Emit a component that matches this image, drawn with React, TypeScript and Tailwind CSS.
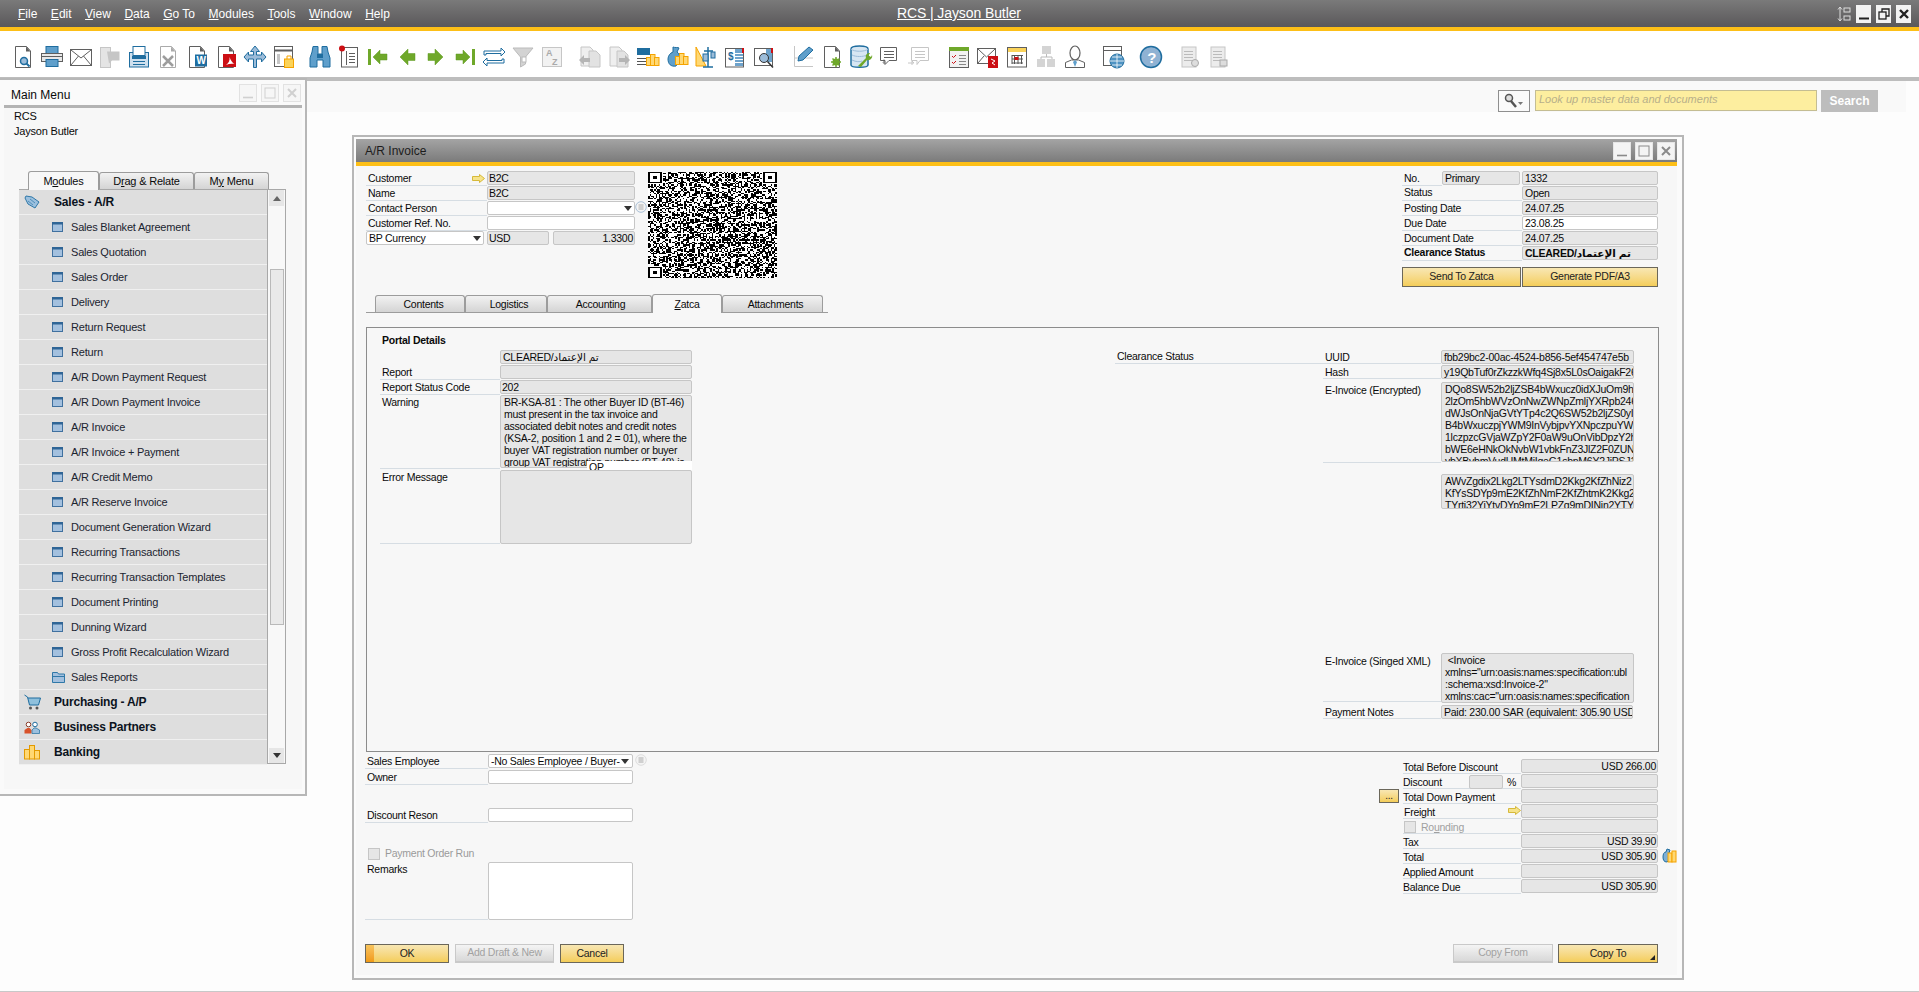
import React from "react";
import clsx from "clsx";

const G = "#5f5f5f", B = "#1f6d9f", LB = "#9cbcd9", GR = "#6fa82a", O = "#f5a300", Y = "#fbd35a", R = "#cc0f14", LG = "#c6c6c6";

const S = ({ children, cn }: { children: React.ReactNode; cn?: string }) => (
  <svg viewBox="0 0 24 24" className={cn ?? "w-6 h-6"} fill="none">{children}</svg>
);
const Doc = ({ c = G }: { c?: string }) => (<><path d="M4.5 1.5h11l4 4.5v16.500h-15z" stroke={c} fill="#fff" /><path d="M15 1.500v5h4.500z" fill={c} /></>);
const Coins = ({ x = 0, y = 0 }: { x?: number; y?: number }) => (
  <g transform={`translate(${x} ${y})`} stroke={O} fill="#ffd873"><rect x="0.500" y="5.500" width="4.500" height="8" /><rect x="4.500" y="2.500" width="4.500" height="11" /><rect x="8.500" y="5.500" width="4.500" height="8" /></g>
);
const Lines = ({ x, y, w, n, c = G, gap = 3 }: { x: number; y: number; w: number; n: number; c?: string; gap?: number }) => (
  <g stroke={c}>{Array.from({ length: n }, (_, i) => <path key={i} d={`M${x} ${y + i * gap + 0.5}h${w}`} />)}</g>
);

const toolbar: { ml?: string; el: React.ReactNode }[] = [
  { el: <><Doc /><circle cx="13" cy="16" r="3.500" stroke={B} fill={LB} strokeWidth="1.500" /><path d="M15.500 18.500l3 3" stroke={B} strokeWidth="2" /></> },
  { el: <><rect x="6" y="1.500" width="12" height="8" fill="#5f9fcb" stroke={B} /><rect x="1.500" y="8.500" width="21" height="8" fill="#e8e8e8" stroke={G} /><rect x="6" y="14.500" width="12" height="7" fill="#5f9fcb" stroke={B} /><path d="M1.500 11.500h21" stroke={G} /></> },
  { el: <><rect x="1.500" y="4.500" width="21" height="16" fill="#fff" stroke={G} /><path d="M2 5l10 8 10-8M2 20l7.500-9M22 20l-7.500-9" stroke={G} /></> },
  { el: <><rect x="2.500" y="2.500" width="10" height="20" fill="#e4e4e4" stroke={LG} /><path d="M9 6.500h12.500v9H14l-3 3z" fill={LG} /></> },
  { el: <><rect x="2.500" y="7.500" width="19" height="14.500" fill="#cfe0ee" stroke={B} /><rect x="6" y="1.500" width="12" height="9" fill="#fff" stroke={B} /><rect x="5" y="11" width="14" height="3" fill={B} /><Lines x={6} y={16} w={12} n={2} c={B} /></> },
  { el: <><Doc c="#aaa" /><path d="M7 11l10 10M17 11L7 21" stroke="#9d9d9d" strokeWidth="2.500" /></> },
  { el: <><Doc /><rect x="10" y="9.500" width="12" height="12" fill={B} /><text x="11.500" y="19" fontSize="10" fontWeight="700" fill="#fff" fontFamily="Liberation Sans">W</text></> },
  { el: <><Doc /><rect x="9" y="9" width="13" height="13" fill={R} /><path d="M12 20c3-2 4-5 3.500-8 1 3 3 6 5 7-3-.5-6 0-8.500 1z" fill="#fff" /></> },
  { el: <path d="M12 1l4.500 5.500h-3V10h5V7l4.500 5-4.500 5v-3h-5v8.500h-3V14h-5v3L1 12l4.500-5v3h5V6.500h-3z" fill={LB} stroke={B} /> },
  { el: <><rect x="2.500" y="1.500" width="18" height="20" fill="#fff" stroke={G} /><path d="M3 5.500h17" stroke={G} strokeWidth="2" /><rect x="5" y="9" width="3" height="10" fill={LG} /><rect x="12.500" y="14" width="9" height="8.500" fill={Y} stroke={O} /><path d="M15 14v-3h4v3" stroke={O} /></> },
  { ml: "ml-[7px]", el: <><path d="M4 7l1-5.500h5V9h4V1.500h5L20 7l2 6v9h-7v-7H9v7H2v-9z" fill="#5f9fcb" stroke={B} /><rect x="9" y="9" width="6" height="4" fill={B} /></> },
  { el: <><rect x="4.500" y="2.500" width="16" height="19.500" fill="#fff" stroke={G} /><circle cx="5" cy="3.500" r="3" fill={R} /><Lines x={12} y={8} w={6} n={4} /><path d="M9.500 6v14" stroke={G} /></> },
  { el: <><rect x="2" y="4" width="3" height="16" fill={GR} /><path d="M7 12l7-7v4h7v6h-7v4z" fill={GR} stroke="#5f9a20" strokeWidth=".5" /></> },
  { el: <path d="M5 12l8-8v4.500h7v7h-7V20z" fill={GR} stroke="#5f9a20" strokeWidth=".5" /> },
  { el: <path d="M19 12l-8-8v4.500H4v7h7V20z" fill={GR} stroke="#5f9a20" strokeWidth=".5" /> },
  { el: <><rect x="19" y="4" width="3" height="16" fill={GR} /><path d="M17 12l-7-7v4H3v6h7v4z" fill={GR} stroke="#5f9a20" strokeWidth=".5" /></> },
  { el: <><path d="M2 10V6h17V3l4 4-4 4V8.500H4V10z" fill="#fff" stroke={B} /><path d="M22 14v4H5v3l-4-4 4-4v2.500h15V14z" fill="#fff" stroke={B} /></> },
  { el: <><path d="M2 3h20l-7.500 9v7l-5 3V12z" fill="#d3d3d3" stroke="#bbb" /><rect x="11" y="12" width="4" height="5" fill="#fff" stroke="#bbb" /></> },
  { el: <><rect x="2.500" y="2.500" width="19" height="19" fill="#f2f2f2" stroke={LG} /><text x="6" y="11" fontSize="9" fontWeight="700" fill="#aaa" fontFamily="Liberation Sans">A</text><text x="12" y="20" fontSize="9" fontWeight="700" fill="#aaa" fontFamily="Liberation Sans">Z</text></> },
  { ml: "ml-[9px]", el: <><path d="M3 2h9l3 3v4h-3v12H3z" fill="#efefef" stroke={LG} /><path d="M11 6h7l4 4v12H11z" fill="#e2e2e2" stroke={LG} /><path d="M1 15l5-5v3h6v4H6v3z" fill="#b5b5b5" /></> },
  { el: <><path d="M3 2h9l3 3v16H3z" fill="#efefef" stroke={LG} /><path d="M10 6h7l4 4v12H10z" fill="#e2e2e2" stroke={LG} /><path d="M23 15l-5-5v3h-6v4h6v3z" fill="#b5b5b5" /></> },
  { el: <><rect x="1" y="3" width="13" height="7" fill={B} /><Lines x={1} y={13} w={9} n={3} c="#555" gap={3} /><Coins x={10} y={7} /></> },
  { el: <><path d="M8 2c2 1 5 0 6 1l-2 4c3 2 3 6 2 9l-3 5c-5 1-8-2-8-7 0-3 2-6 5-7z" fill="#5f9fcb" stroke={B} /><Coins x={10} y={6} /></> },
  { el: <><path d="M2 2v19h10z" fill="#ffd873" stroke={O} /><path d="M14 2v20M9 22h10M10 6h9" stroke={B} strokeWidth="1.500" /><rect x="9" y="9" width="5" height="7" fill={LB} stroke={B} /><rect x="17" y="7" width="4" height="6" fill={LB} stroke={B} /></> },
  { el: <><rect x="2.500" y="3.500" width="18" height="18.500" fill="#fff" stroke={G} /><rect x="12" y="4" width="8" height="17" fill="#6ea3cc" /><text x="5" y="15" fontSize="10" fontWeight="700" fill={B} fontFamily="Liberation Sans">$</text><Lines x={12} y={8} w={8} n={4} c="#fff" /><rect x="19" y="3" width="2" height="5" fill={R} /></> },
  { el: <><rect x="2.500" y="3.500" width="18" height="17" fill="#fff" stroke={G} /><rect x="14" y="4" width="6" height="13" fill="#6ea3cc" /><circle cx="12" cy="13" r="4.500" fill={LB} stroke="#333" /><path d="M15.500 16.500l5.500 6" stroke="#333" strokeWidth="1.500" /><rect x="19" y="3" width="2" height="5" fill={R} /></> },
  { ml: "ml-[10px]", el: <><path d="M3.500 1v20.500H22" stroke={LG} /><path d="M3 13h19" stroke={LG} /><path d="M7 16l1-5L18 2l4 3-10 10z" fill="#5f9fcb" stroke={B} /></> },
  { el: <><Doc /><circle cx="16" cy="17" r="3.500" fill={GR} /><circle cx="16" cy="17" r="1.200" fill="#fff" /><path d="M16 12v10M11 17h10M12.500 13.500l7 7M19.500 13.500l-7 7" stroke={GR} strokeWidth="1.500" /></> },
  { el: <><path d="M2 4c0-4 17-4 17 0v16c0 3-17 3-17 0z" fill="#d7e6f2" stroke={B} strokeWidth="1.500" /><path d="M2 4c3 3 14 3 17 0M3 10c4 2 11 2 15 0M3 15c4 2 8 2 10 1" stroke={LB} /><path d="M9 21l8-8c-1-3 1-5 4-5l-1.500 2.500 2.500 1.500 1-2c1 3-2 6-5 5l-6 7z" fill={GR} /></> },
  { el: <><path d="M2.500 2.500h16v13H11l-4 4v-4H2.500z" stroke={G} fill="#fff" /><path d="M6 14.500v4l-1-1" stroke={G} /><Lines x={6} y={6} w={10} n={3} gap={3} /></> },
  { el: <><path d="M4.500 2.500h17v13H13l-3 4v-4H4.500z" stroke={LG} fill="#fff" /><Lines x={8} y={6} w={10} n={3} gap={3} c={LG} /><path d="M1 18h6l-2-2v4" stroke={LG} /></> },
  { ml: "ml-[11px]", el: <><rect x="2.500" y="2.500" width="19" height="20" fill="#f2f2f2" stroke={G} /><rect x="2" y="2" width="20" height="4" fill={GR} /><path d="M5 11l1.500 1.500L9 10M5 17l1.500 1.500L9 16" stroke={R} /><Lines x={12} y={10} w={7} n={4} gap={3} c="#888" /></> },
  { el: <><rect x="1.500" y="3.500" width="18" height="15" fill="#fff" stroke={G} /><path d="M2 4l8.500 8L19 4M2 18l6-7M19 18l-6-7" stroke={G} /><rect x="12" y="11" width="10" height="12" fill={R} /><path d="M15 14l4 2-3 2 3 2" stroke="#fff" /></> },
  { el: <><rect x="2.500" y="2.500" width="19" height="19.500" fill="#fff" stroke={G} /><rect x="3" y="3" width="18" height="4" fill={Y} /><path d="M7 10.500h11M7 14h11M7 18h11M9.500 10v9M13 10v9M16.500 10v9M7 10v9" stroke="#555" /><rect x="9.500" y="12" width="4" height="3" fill={R} /></> },
  { el: <><rect x="8" y="1" width="9" height="8" fill="#d4d4d4" /><rect x="3" y="14" width="8" height="8" fill="#d4d4d4" /><rect x="13" y="14" width="8" height="8" fill="#d4d4d4" /><path d="M12.500 9v3M7 14v-2h11v2" stroke="#bbb" /></> },
  { el: <><ellipse cx="12" cy="8" rx="5" ry="7" fill="#fff" stroke={G} strokeWidth="1.200" /><path d="M2.500 22.500v-5l6-2.500h7l6 2.500v5z" fill="#fff" stroke={G} /><path d="M12 15l-2 2 2 5 2-5z" fill="#5f9fcb" /></> },
  { ml: "ml-[9px]", el: <><rect x="2.500" y="1.500" width="18" height="19" fill="#fff" stroke={G} /><path d="M3 5.500h17" stroke={G} /><circle cx="16" cy="16" r="7" fill="#4f93c3" stroke={B} /><path d="M9 16h14M16 9v14M11 12h10M11 20h10" stroke="#fff" strokeWidth=".8" /></> },
  { ml: "ml-[9px]", el: <><circle cx="12" cy="12" r="10.500" fill="#8fb2d3" stroke={B} strokeWidth="1.500" /><text x="8.300" y="17.500" fontSize="15" fontWeight="700" fill="#fff" fontFamily="Liberation Sans">?</text></> },
  { ml: "ml-[9px]", el: <><rect x="5" y="2" width="14" height="20" fill="#ececec" stroke={LG} /><Lines x={7} y={6} w={9} n={4} c="#bbb" /><circle cx="18" cy="18" r="3.500" fill="#ddd" stroke="#aaa" /></> },
  { el: <><rect x="5" y="2" width="14" height="20" fill="#ececec" stroke={LG} /><Lines x={7} y={6} w={9} n={4} c="#bbb" /><rect x="14" y="15" width="7" height="6" fill="#ddd" stroke="#aaa" /></> },
];

const menu = ["File", "Edit", "View", "Data", "Go To", "Modules", "Tools", "Window", "Help"];

const qrPath = (() => {
  let seed = 20250724;
  const rnd = () => { seed = (seed * 1664525 + 1013904223) >>> 0; return seed / 4294967296; };
  const n = 85;
  const inFinder = (x: number, y: number) => (x < 10 && y < 10) || (x >= n - 10 && y < 10) || (x < 10 && y >= n - 10);
  let d = "";
  for (let y = 0; y < n; y++) for (let x = 0; x < n; x++) if (!inFinder(x, y) && rnd() > 0.5) d += `M${x} ${y}h1v1h-1z`;
  const f = (x: number, y: number) => `M${x} ${y}h9v9h-9zM${x + 1} ${y + 1}v7h7v-7zM${x + 3} ${y + 3}h3v3h-3z`;
  return d + f(0, 0) + f(n - 9, 0) + f(0, n - 9);
})();

const Mn = ({ t, i = 0 }: { t: string; i?: number }) => <span>{t.slice(0, i)}<u>{t[i]}</u>{t.slice(i + 1)}</span>;
const Cleared = () => <><span>CLEARED/</span><span className="tracking-normal">تم الإعتماد</span></>;

const WinBtns = ({ dim }: { dim?: boolean }) => {
  const c = dim ? "#d0d0d0" : "#8a8a8a";
  const box = clsx("w-[18px] h-[18px] border flex items-center justify-center", dim ? "border-[#e2e2e2] bg-[#f6f6f6]" : "border-[#e6e6e6] bg-[#f4f4f4]");
  return (
    <div className="flex gap-[4px]">
      <div className={box}><svg viewBox="0 0 12 12" className="w-3 h-3"><path d="M1 10.500h10" stroke={c} strokeWidth="1.600" /></svg></div>
      <div className={box}><svg viewBox="0 0 12 12" className="w-3 h-3"><rect x="1" y="1" width="10" height="10" fill="none" stroke={c} /></svg></div>
      <div className={box}><svg viewBox="0 0 12 12" className="w-3 h-3"><path d="M2 2l8 8M10 2l-8 8" stroke={c} strokeWidth="2" /></svg></div>
    </div>
  );
};

const Arrow = () => (
  <svg viewBox="0 0 13 9" className="w-[13px] h-[9px] shrink-0"><path d="M.5 2.500h7V.5l5 4-5 4v-2h-7z" fill="#f6e38a" stroke="#d6b93a" /></svg>
);
const Tri = () => <svg viewBox="0 0 8 5" className="w-2 h-[5px] shrink-0"><path d="M0 0h8L4 5z" fill="#333" /></svg>;
const Dots = ({ dim }: { dim?: boolean }) => (
  <svg viewBox="0 0 12 12" className="w-3 h-3 shrink-0"><circle cx="6" cy="6" r="5.300" fill="#f4f4f4" stroke={dim ? "#ddd" : "#a9bfd6"} /><path d="M3.500 4h5M3.500 6h5M3.500 8h5" stroke="#999" strokeWidth=".8" /></svg>
);

const Lab = ({ w, children, className }: { w: string; children?: React.ReactNode; className?: string }) => (
  <div className={clsx("h-[15px] border-b border-[#d6dde3] leading-[15px] pl-[2px] whitespace-nowrap shrink-0", w, className)}>{children}</div>
);
const Field = ({ w, white, children, right, className }: { w: string; white?: boolean; right?: boolean; children?: React.ReactNode; className?: string }) => (
  <div className={clsx("h-[14px] border border-[#c6c6c6] rounded-[2px] leading-[13px] px-[1px] overflow-hidden whitespace-nowrap shrink-0 flex items-center", white ? "bg-white" : "bg-[#e6e6e6]", right ? "justify-end" : "", w, className)}>{children}</div>
);
const YBtn = ({ w, children, className }: { w: string; children: React.ReactNode; className?: string }) => (
  <div className={clsx("relative flex items-center justify-center border border-[#6b675a] bg-linear-to-b from-[#f8e7b3] to-[#f4cd58] text-[#222]", w, className)}>{children}</div>
);
const GBtn = ({ w, children }: { w: string; children: React.ReactNode }) => (
  <div className={clsx("flex items-center justify-center border border-[#c9c9c9] border-b-2 bg-linear-to-b from-[#f4f4f4] to-[#d8d8d8] text-[#a2a2a2]", w)}>{children}</div>
);

const Lines2 = ({ lines, h, className }: { lines: string[]; h: string; className?: string }) => (
  <div className={clsx("bg-[#e6e6e6] border border-[#c6c6c6] rounded-[2px] overflow-hidden leading-[12px] whitespace-nowrap", h, className)}>
    {lines.map((l) => <div key={l}>{l}</div>)}
  </div>
);

const WinIcon = () => (
  <svg viewBox="0 0 11 10" className="w-[11px] h-[10px]"><rect x=".5" y=".5" width="10" height="9" fill="#a3c0de" stroke="#3f709f" /><rect x="0" y="0" width="11" height="2.500" fill="#2f6596" /></svg>
);
const FolderIcon = () => (
  <svg viewBox="0 0 13 11" className="w-[13px] h-[11px]"><path d="M.5 10.500V.5h5l1 1.500h6v8.500z" fill="#a3c0de" stroke="#2f78a8" /><path d="M1 4.500h11" stroke="#2f78a8" /></svg>
);

const subItems = ["Sales Blanket Agreement", "Sales Quotation", "Sales Order", "Delivery", "Return Request", "Return", "A/R Down Payment Request", "A/R Down Payment Invoice", "A/R Invoice", "A/R Invoice + Payment", "A/R Credit Memo", "A/R Reserve Invoice", "Document Generation Wizard", "Recurring Transactions", "Recurring Transaction Templates", "Document Printing", "Dunning Wizard", "Gross Profit Recalculation Wizard", "Sales Reports"];

const modIcons: Record<string, React.ReactNode> = {
  "Sales - A/R": <svg viewBox="0 0 16 14" className="w-4 h-[14px]"><path d="M1 3l1-2 6 1 7 5-4 6-7-4z" fill="#9cc0de" stroke="#2f78a8" /><path d="M4 6l5 4M6 4l5 4" stroke="#2f78a8" strokeWidth=".7" /></svg>,
  "Purchasing - A/P": <svg viewBox="0 0 17 16" className="w-[17px] h-4"><path d="M.5 1l3 2 2 8h9l2-7H4" fill="#8fc0dc" stroke="#1f6d9f" /><circle cx="6.500" cy="14" r="1.500" fill="#555" /><circle cx="13" cy="14" r="1.500" fill="#555" /></svg>,
  "Business Partners": <svg viewBox="0 0 16 13" className="w-4 h-[13px]"><path d="M.5 12.500V9l3-2h2l2 2v3.500z" fill="#d8522a" /><path d="M8 12.500V9l2-2h2l3.500 2v3.500z" fill="#9cc0de" stroke="#1f6d9f" strokeWidth=".7" /><circle cx="4.500" cy="3.500" r="2.300" fill="#fff" stroke="#8a3d2a" /><circle cx="11" cy="3.500" r="2.300" fill="#fff" stroke="#1f6d9f" /></svg>,
  Banking: <svg viewBox="0 0 16 15" className="w-4 h-[15px]"><g stroke="#e39a00" fill="#ffd873"><rect x=".5" y="4.500" width="5" height="9.500" /><rect x="5.500" y=".5" width="5" height="13.500" /><rect x="10.500" y="5.500" width="5" height="8.500" /></g></svg>,
};

const ModRow = ({ t }: { t: string }) => (
  <div className="h-[25px] border-b border-[#f0f0f0] bg-[#dedede] flex items-center font-bold text-[12px] tracking-[-0.2px] text-[#0b1320]">
    <div className="w-[35px] pl-[5px] flex justify-start">{modIcons[t]}</div><div>{t}</div>
  </div>
);

const Tab = ({ w, active, children }: { w: string; active?: boolean; children: React.ReactNode }) => (
  <div className={clsx("flex items-center justify-center border border-b-0 rounded-t-[3px] border-[#9c9c9c] shrink-0 pt-px", w, active ? "h-[19px] bg-[#f7f7f7] -mb-px relative z-10" : "h-[17px] bg-linear-to-b from-[#f2f2f2] to-[#d4d4d4]")}>{children}</div>
);

const Portal = () => (
  <div className="flex">
    <div className="w-[312px] ml-[13px]">
      <div className="h-[22px] pl-[2px] pt-[5px] font-bold leading-[14px]">Portal Details</div>
      <div className="flex"><div className="w-[120px]" /><Field w="w-[192px]" className="pl-[2px]"><Cleared /></Field></div>
      <div className="flex mt-px"><Lab w="w-[120px]">Report</Lab><Field w="w-[192px]" /></div>
      <div className="flex"><Lab w="w-[120px]">Report Status Code</Lab><Field w="w-[192px]">202</Field></div>
      <div className="flex h-[75px] relative">
        <Lab w="w-[120px] !h-[74px]">Warning</Lab>
        <Lines2 h="h-[73px]" className="w-[192px] pl-[3px]" lines={["BR-KSA-81 : The other Buyer ID (BT-46)", "must present in the tax invoice and", "associated debit notes and credit notes", "(KSA-2, position 1 and 2 = 01), where the", "buyer VAT registration number or buyer", "group VAT registration number (BT-48) is"]} />
        <div className="absolute left-[207px] top-[66px] w-[105px] h-[9px] bg-white overflow-hidden pl-[2px] leading-[13px] z-10">OP</div>
      </div>
      <div className="flex">
        <Lab w="w-[120px] !h-[74px]">Error Message</Lab>
        <div className="w-[192px] h-[74px] bg-[#e6e6e6] border border-[#c6c6c6] rounded-[2px]" />
      </div>
    </div>
    <div className="w-[208px] ml-[423px] mt-[22px]">
      <Lab w="w-full !h-[14px] pl-[2px] !leading-[13px]">Clearance Status</Lab>
    </div>
    <div className="w-[311px] mt-[22px]">
      <div className="flex"><Lab w="w-[118px] !h-[14px]">UUID</Lab><Field w="w-[193px]" className="pl-[2px]">fbb29bc2-00ac-4524-b856-5ef454747e5b</Field></div>
      <div className="flex mt-px"><Lab w="w-[118px] !h-[14px]">Hash</Lab><Field w="w-[193px]" className="pl-[2px]">y19QbTuf0rZkzzkWfq4Sj8x5L0sOaigakF26</Field></div>
      <div className="flex mt-[3px]">
        <Lab w="w-[118px] !h-[81px] pt-[1px]">E-Invoice (Encrypted)</Lab>
        <Lines2 h="h-[80px]" className="w-[193px] pl-[3px]" lines={["DQo8SW52b2ljZSB4bWxucz0idXJuOm9hc", "2lzOm5hbWVzOnNwZWNpZmljYXRpb246", "dWJsOnNjaGVtYTp4c2Q6SW52b2ljZS0yIi", "B4bWxuczpjYWM9InVybjpvYXNpczpuYW", "1lczpzcGVjaWZpY2F0aW9uOnVibDpzY2hl", "bWE6eHNkOkNvbW1vbkFnZ3JlZ2F0ZUN", "vbXBvbmVudHMtMiIgeG1sbnM6Y2JjPSJ1c"]} />
      </div>
      <div className="flex mt-[11px]">
        <div className="w-[118px]" />
        <Lines2 h="h-[35px]" className="w-[193px] pl-[3px]" lines={["AWvZgdix2Lkg2LTYsdmD2Kkg2KfZhNiz2", "KfYsSDYp9mE2KfZhNmF2KfZhtmK2Kkg2Y", "TYrti32YiYtvDYp9mE2LPZq9mDINin2YTYr"]} />
      </div>
      <div className="flex mt-[144px]">
        <Lab w="w-[118px] !h-[49px] pt-[1px]">E-Invoice (Singed XML)</Lab>
        <Lines2 h="h-[50px]" className="w-[193px] pl-[3px]" lines={["\u00a0<Invoice", "xmlns=\"urn:oasis:names:specification:ubl", ":schema:xsd:Invoice-2\"", "xmlns:cac=\"urn:oasis:names:specification"]} />
      </div>
      <div className="flex mt-[2px]"><Lab w="w-[118px] !h-[14px]">Payment Notes</Lab><Field w="w-[192px]" className="pl-[2px]">Paid: 230.00 SAR (equivalent: 305.90 USD</Field></div>
    </div>
  </div>
);

const Total = ({ l, v, children, extra }: { l?: React.ReactNode; v?: string; children?: React.ReactNode; extra?: React.ReactNode }) => (
  <div className="flex h-[15px] relative">
    <div className="w-[118px] h-[15px] pt-px border-b border-[#d6dde3] leading-[14px] flex items-center shrink-0 whitespace-nowrap">{l}{children}</div>
    <Field w="w-[137px]" right>{v}</Field>
    {extra}
  </div>
);

const App = () => (
  <div className="relative w-[1919px] h-[992px] overflow-hidden bg-[#fdfdfd] text-[11px] text-[#0a0a0a] font-['Liberation_Sans','DejaVu_Sans',sans-serif] flex flex-col">
    <div className="h-[27px] bg-linear-to-b from-[#7a7a7a] to-[#5a585a] flex items-center relative text-white shrink-0">
      <div className="flex text-[12px] ml-[18px] gap-[13.5px]">
        {menu.map((m) => <Mn key={m} t={m} />)}
      </div>
      <div className="absolute left-[897px] top-[5px] text-[14px] leading-[17px] underline tracking-[-0.1px]">RCS | Jayson Butler</div>
      <div className="ml-auto mr-[8px] flex items-center gap-[5px]">
        <svg viewBox="0 0 14 16" className="w-[14px] h-4"><path d="M3 1v14M1 3.500l2-2.500 2 2.500M1 12.500L3 15l2-2.500" stroke="#ddd" fill="none" /><rect x="7" y="2" width="6" height="4" stroke="#ddd" fill="none" /><rect x="7" y="10" width="6" height="4" stroke="#ddd" fill="none" /></svg>
        {[<path key="a" d="M2 11.500h10" stroke="#222" strokeWidth="2" />, <g key="b" stroke="#222" strokeWidth="1.300" fill="none"><rect x="2" y="5" width="7" height="7" /><path d="M5 5V2h7v7H9" /></g>, <path key="c" d="M3 3l8 8M11 3l-8 8" stroke="#222" strokeWidth="2.400" />].map((p, i) => (
          <div key={i} className="w-[15px] h-[18px] bg-[#f3f3f3] flex items-center justify-center"><svg viewBox="0 0 14 14" className="w-[14px] h-[14px]">{p}</svg></div>
        ))}
      </div>
    </div>
    <div className="h-1 bg-[#fdbf17] shrink-0" />
    <div className="h-[46px] bg-white flex items-center pl-[8px] shrink-0 pt-[5px]">
      {toolbar.map((t, i) => (
        <div key={i} className={clsx("w-[29px] flex justify-center shrink-0", t.ml)}><S>{t.el}</S></div>
      ))}
    </div>
    <div className="h-1 bg-[#bdbdbd] shrink-0" />
    <div className="h-[31px] w-[1906px] bg-[#f9f9f9] flex justify-end pt-[9px] pr-[28px] gap-[4px] shrink-0">
      <div className="w-[32px] h-[22px] border border-[#8f8f8f] bg-[#fafafa] flex items-center justify-center">
        <svg viewBox="0 0 22 16" className="w-[22px] h-4"><circle cx="6" cy="5" r="3.500" fill="#ddd" stroke="#555" strokeWidth="1.500" /><path d="M8 8l5 6" stroke="#555" strokeWidth="2.500" /><path d="M15 9h5l-2.500 3z" fill="#777" /></svg>
      </div>
      <div className="w-[282px] h-[21px] ml-[1px] border border-[#c4bd93] bg-[#fdee9f] italic text-[#b8b08a] leading-[17px] pl-[3px]">Look up master data and documents</div>
      <div className="w-[57px] h-[22px] bg-[#bdbdbd] text-white font-bold text-[12px] flex items-center justify-center">Search</div>
    </div>
    <div className="flex-1" />
    <div className="h-px bg-[#c8c8c8] shrink-0" />

    {/* Main Menu window */}
    <div className="absolute left-0 top-[78px] w-[307px] h-[718px] border-t-2 border-r-2 border-b-2 border-[#b7b7b7] bg-[#fafafa] pt-[2px] pl-[4px] pr-[3px] pb-[3px] tracking-[-0.2px]">
      <div className="h-[22px] flex items-center justify-between text-[12px] pl-[7px] pr-[1px]">
        <div className="pt-[3px] tracking-normal">Main Menu</div>
        <WinBtns dim />
      </div>
      <div className="h-[3px] bg-[#b3b3b3] mt-[1px]" />
      <div className="bg-[#f7f7f7] h-[681px]">
        <div className="pl-[10px] pt-[1px] leading-[15px]">
          <div>RCS</div>
          <div>Jayson Butler</div>
        </div>
        <div className="flex mt-[32px] ml-[24px] h-[18px] items-end">
          <div className="w-[71px] h-[19px] -mb-px relative z-10 bg-[#f7f7f7] border border-b-0 border-[#9c9c9c] rounded-t-[3px] flex items-center justify-center"><Mn t="Modules" i={1} /></div>
          <div className="w-[95px] h-[17px] bg-linear-to-b from-[#f2f2f2] to-[#d4d4d4] border border-b-0 border-[#9c9c9c] rounded-t-[3px] flex items-center justify-center"><Mn t="Drag & Relate" i={1} /></div>
          <div className="w-[75px] h-[17px] bg-linear-to-b from-[#f2f2f2] to-[#d4d4d4] border border-b-0 border-[#9c9c9c] rounded-t-[3px] flex items-center justify-center"><Mn t="My Menu" i={1} /></div>
        </div>
        <div className="ml-[15px] w-[267px] h-[575px] border-t border-r border-b border-[#a8a8a8] flex">
          <div className="w-[249px] shrink-0 border-r border-[#a8a8a8]">
            <ModRow t="Sales - A/R" />
            {subItems.map((s) => (
              <div key={s} className="h-[25px] border-b border-[#f0f0f0] bg-[#dedede] flex items-center text-[#1b2430]">
                <div className="w-[52px] pl-[33px] flex items-center shrink-0">{s === "Sales Reports" ? <FolderIcon /> : <WinIcon />}</div>
                <div className="text-[11px] whitespace-nowrap">{s}</div>
              </div>
            ))}
            <ModRow t="Purchasing - A/P" />
            <ModRow t="Business Partners" />
            <ModRow t="Banking" />
          </div>
          <div className="flex-1 bg-[#f8f8f8] flex flex-col items-center">
            <div className="w-[15px] h-[16px] bg-[#e6e6e6] flex items-center justify-center"><svg viewBox="0 0 8 5" className="w-2 h-[5px]"><path d="M0 5h8L4 0z" fill="#666" /></svg></div>
            <div className="w-[14px] h-[356px] mt-[63px] bg-[#e9e9e9] border border-[#b9b9b9]" />
            <div className="mt-auto w-[15px] h-[15px] bg-[#e6e6e6] flex items-center justify-center"><Tri /></div>
          </div>
        </div>
      </div>
    </div>

    {/* A/R Invoice window */}
    <div className="absolute left-[352px] top-[135px] w-[1332px] h-[845px] border-2 border-[#b7b7b7] bg-[#fbfbfb] pt-[2px] pl-[2px] pr-[5px] pb-[3px] text-[10.5px] tracking-[-0.25px]">
      <div className="h-[23px] bg-linear-to-b from-[#a4a4a4] to-[#7b7b7b] flex items-center justify-between pl-[9px] pr-[2px] text-[12px] tracking-normal text-[#1c1c1c]">
        <div>A/R Invoice</div>
        <WinBtns />
      </div>
      <div className="h-1 bg-[#fdbf17]" />
      <div className="bg-[#f7f7f7] h-[809px] pl-[10px] pt-[5px]">
        {/* Header */}
        <div className="h-[123px] w-[1293px] flex">
          <div className="w-[269px]">
            <div className="flex"><Lab w="w-[121px]" className="flex items-center justify-between pr-[2px]">Customer<Arrow /></Lab><Field w="w-[148px]">B2C</Field></div>
            <div className="flex"><Lab w="w-[121px]">Name</Lab><Field w="w-[148px]">B2C</Field></div>
            <div className="flex"><Lab w="w-[121px]">Contact Person</Lab><Field w="w-[148px] justify-end pr-[2px]" white><Tri /></Field></div>
            <div className="flex"><Lab w="w-[121px]">Customer Ref. No.</Lab><Field w="w-[148px]" white /></div>
            <div className="flex">
              <Field w="w-[118px] justify-between pl-[2px] pr-[2px]" white className="mr-[3px]">BP Currency<Tri /></Field>
              <Field w="w-[62px]" className="mr-[4px]">USD</Field>
              <Field w="w-[82px]" right>1.3300</Field>
            </div>
          </div>
          <div className="relative w-[12px] shrink-0"><div className="absolute left-0 top-[30px]"><Dots /></div></div>
          <svg viewBox="0 0 85 85" preserveAspectRatio="none" shapeRendering="crispEdges" className="w-[129px] h-[106px] ml-[1px] mt-px"><rect width="85" height="85" fill="#fff" /><path d={qrPath} fillRule="evenodd" fill="#000" /></svg>
          <div className="w-[256px] ml-auto mr-px">
            <div className="flex"><Lab w="w-[40px]">No.</Lab><Field w="w-[78px]" className="pl-[2px]">Primary</Field><div className="w-[2px]" /><Field w="w-[136px]" className="pl-[2px]">1332</Field></div>
            <div className="flex"><Lab w="w-[120px]" className="!leading-[13px]">Status</Lab><Field w="w-[136px]" className="pl-[2px]">Open</Field></div>
            <div className="flex"><Lab w="w-[120px]">Posting Date</Lab><Field w="w-[136px]" className="pl-[2px]">24.07.25</Field></div>
            <div className="flex"><Lab w="w-[120px]">Due Date</Lab><Field w="w-[136px]" white className="pl-[2px]">23.08.25</Field></div>
            <div className="flex"><Lab w="w-[120px]">Document Date</Lab><Field w="w-[136px]" className="pl-[2px]">24.07.25</Field></div>
            <div className="flex"><Lab w="w-[120px]" className="font-bold !leading-[13px]">Clearance Status</Lab><Field w="w-[136px]" className="pl-[2px] font-bold"><Cleared /></Field></div>
            <div className="flex mt-[6px] gap-[1px]">
              <YBtn w="w-[119px] h-[20px]">Send To Zatca</YBtn>
              <YBtn w="w-[136px] h-[20px]">Generate PDF/A3</YBtn>
            </div>
          </div>
        </div>
        {/* Tabs */}
        <div className="w-[462px] h-[19px] border-b border-[#9c9c9c] pl-[9px] flex items-end">
          <Tab w="w-[90px] pl-[7px]">Contents</Tab>
          <Tab w="w-[82px] pl-[6px]">Logistics</Tab>
          <Tab w="w-[105px] pl-[2px]">Accounting</Tab>
          <Tab w="w-[70px]" active><Mn t="Zatca" /></Tab>
          <Tab w="w-[101px] pl-[6px]">Attachments</Tab>
        </div>
        <div className="w-[1293px] h-[425px] mt-[14px] border border-[#8c8c8c] overflow-hidden">
          <Portal />
        </div>
        {/* Footer */}
        <div className="w-[1293px] h-[192px] flex justify-between">
          <div className="-ml-px pt-[2px]">
            <div className="flex items-start"><Lab w="w-[123px]">Sales Employee</Lab><Field w="w-[145px] justify-between pl-[2px] pr-[3px]" white>-No Sales Employee / Buyer-<Tri /></Field><div className="ml-[2px]"><Dots dim /></div></div>
            <div className="flex mt-px"><Lab w="w-[123px]">Owner</Lab><Field w="w-[145px]" white /></div>
            <div className="flex mt-[23px]"><Lab w="w-[123px]">Discount Reson</Lab><Field w="w-[145px]" white /></div>
            <div className="flex mt-[23px] h-[16px] items-center text-[#9a9a9a] pl-[3px]"><div className="w-[12px] h-[12px] bg-[#e6e6e6] border border-[#c6c6c6] mr-[5px]" />Payment Order Run</div>
            <div className="flex"><Lab w="w-[123px] !h-[58px]">Remarks</Lab><Field w="w-[145px] !h-[58px]" white /></div>
          </div>
          <div className="w-[279px] mr-px pt-[7px]">
            <div className="pl-[24px]">
              <Total l="Total Before Discount" v="USD 266.00" />
              <Total l={<>Discount<div className="ml-auto mr-[18px] w-[34px] h-[14px] border border-[#c6c6c6] rounded-[2px] bg-[#e6e6e6]" /><span className="absolute left-[104px]">%</span></>} />
              <Total l="Total Down Payment" extra={<div className="absolute -left-[24px] top-0"><YBtn w="w-[20px] h-[14px]"><span className="leading-[10px] text-[10px]">...</span></YBtn></div>} />
              <Total l={<span className="pl-px">Freight</span>} extra={<div className="absolute left-[105px] top-[2px]"><Arrow /></div>} />
              <Total l={<span className="pl-px flex items-center text-[#a0a0a0]"><span className="w-[12px] h-[12px] bg-[#e6e6e6] border border-[#c6c6c6] mr-[5px]" /><Mn t="Rounding" i={2} /></span>} />
              <Total l="Tax" v="USD 39.90" />
              <Total l="Total" v="USD 305.90" extra={<svg viewBox="0 0 15 15" className="absolute left-[259px] -top-[1px] w-[15px] h-[15px]"><path d="M5 1l3 1-1 3c2 1 2 4 1 6L5 14C2 14 1 12 1 9s1-5 3-5z" fill="#7fb0d6" stroke="#1f6d9f" /><rect x="6" y="5" width="4" height="9" fill="#ffd873" stroke="#f5a300" /><rect x="10" y="3" width="4" height="11" fill="#ffd873" stroke="#f5a300" /></svg>} />
              <Total l="Applied Amount" />
              <Total l="Balance Due" v="USD 305.90" />
            </div>
          </div>
        </div>
        <div className="w-[1293px] flex">
          <YBtn w="w-[84px] h-[19px] -ml-px" className="overflow-hidden"><div className="absolute left-0 top-0 bottom-0 w-[8px] bg-linear-to-b from-[#f8c45c] to-[#f19a12]" />OK</YBtn>
          <div className="ml-[6px]"><GBtn w="w-[99px] h-[19px]">Add Draft &amp; New</GBtn></div>
          <YBtn w="w-[64px] h-[19px] ml-[6px]">Cancel</YBtn>
          <div className="ml-auto mr-[5px]"><GBtn w="w-[100px] h-[19px]">Copy From</GBtn></div>
          <YBtn w="w-[100px] h-[19px] mr-px">Copy To<svg viewBox="0 0 5 5" className="absolute right-[2px] bottom-[2px] w-[5px] h-[5px]"><path d="M5 0v5H0z" fill="#222" /></svg></YBtn>
        </div>
      </div>
    </div>
  </div>
);

export default App;
